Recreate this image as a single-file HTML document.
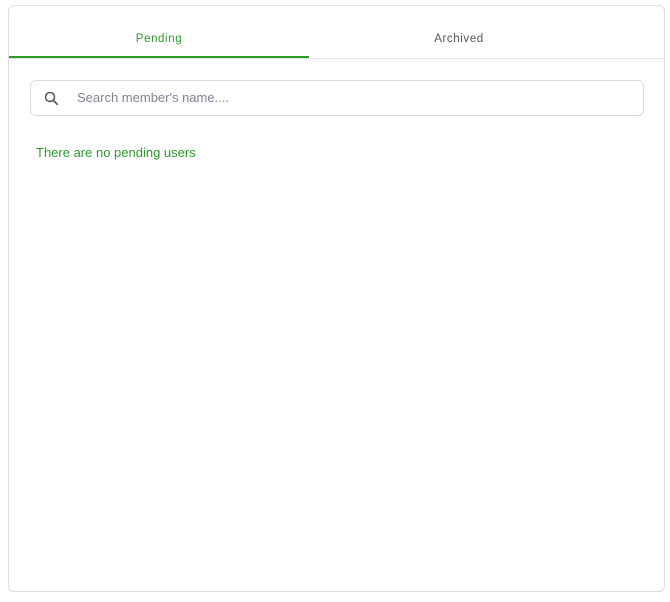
<!DOCTYPE html>
<html><head><style>
body{margin:0;width:670px;height:602px;background:#fff;font-family:"Liberation Sans",sans-serif;position:relative;overflow:hidden}
.card{position:absolute;left:8px;top:5px;width:657px;height:587px;border:1px solid #dcdde6;border-radius:6px;box-sizing:border-box}
.tab{position:absolute;top:0;height:52px;line-height:66px;text-align:center;font-size:11.5px;letter-spacing:0.6px}
.line{position:absolute;left:0;right:0;top:52px;border-top:1px solid #e2e3ec}
.ul{position:absolute;left:0;top:50px;width:300px;height:2px;background:#2a9a2a}
.search{position:absolute;left:21px;top:74px;width:614px;height:36px;border:1px solid #d9dae2;border-radius:6px;box-sizing:border-box}
.ph{position:absolute;left:46px;top:0;line-height:34px;font-size:13px;color:#7f8293}
.msg{position:absolute;left:27px;top:139px;font-size:13px;color:#2a9a2a}
</style></head><body>
<div class="card">
<div class="tab" style="left:0;width:300px;color:#2a9a2a">Pending</div>
<div class="tab" style="left:300px;width:300px;color:#555">Archived</div>
<div class="line"></div><div class="ul"></div>
<div class="search">
<svg style="position:absolute;left:13px;top:10px" width="15" height="15" viewBox="0 0 15 15"><circle cx="6" cy="6" r="4.5" fill="none" stroke="#555" stroke-width="1.5"/><line x1="9.3" y1="9.3" x2="13.3" y2="13.3" stroke="#555" stroke-width="1.7" stroke-linecap="round"/></svg>
<div class="ph">Search member's name....</div>
</div>
<div class="msg">There are no pending users</div>
</div>
</body></html>
